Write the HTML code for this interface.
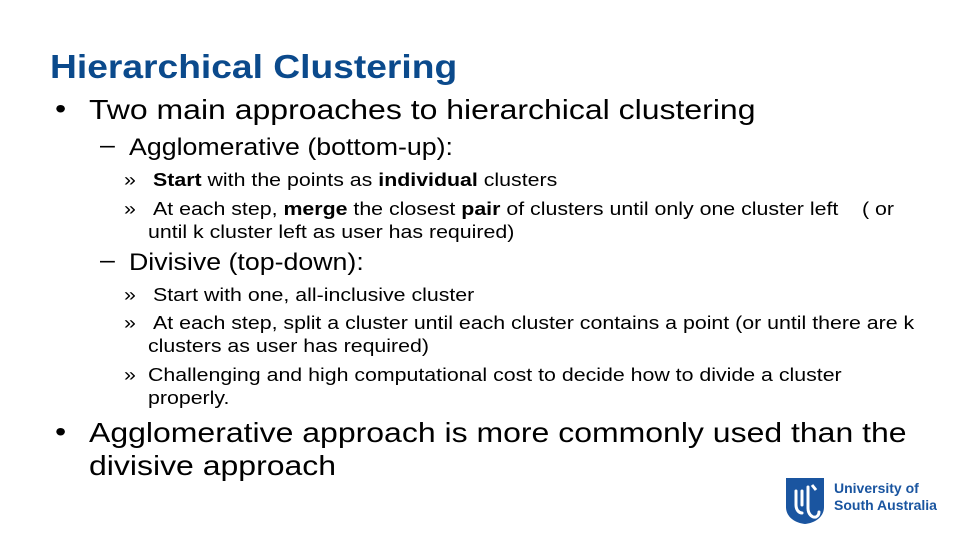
<!DOCTYPE html>
<html><head><meta charset="utf-8"><style>
body{margin:0;width:960px;height:540px;background:#fff;position:relative;overflow:hidden;font-family:"Liberation Sans",Arial,sans-serif;color:#000}
.l{position:absolute;white-space:nowrap;line-height:1;transform-origin:0 0}
.t{left:50px;top:50px;font-size:33px;font-weight:bold;color:#0b4a8c;transform:scaleX(1.127)}
.a{font-size:28px;transform:scaleX(1.142)}
.b{font-size:24px;transform:scaleX(1.114)}
.c{font-size:18px;transform:scaleX(1.185)}
</style></head><body>
<div class="l t">Hierarchical Clustering</div>
<div class="l a" style="left:55px;top:95px">•</div>
<div class="l a" style="left:89px;top:96px">Two main approaches to hierarchical clustering</div>
<div class="l b" style="left:100px;top:134px">–</div>
<div class="l b" style="left:129px;top:136px">Agglomerative (bottom-up):</div>
<div class="l c" style="left:124px;top:171px">»</div>
<div class="l c" style="left:153px;top:171px"><b>Start</b> with the points as <b>individual</b> clusters</div>
<div class="l c" style="left:124px;top:200px">»</div>
<div class="l c" style="left:153px;top:200px">At each step, <b>merge</b> the closest <b>pair</b> of clusters until only one cluster left &nbsp;&nbsp;&nbsp;( or</div>
<div class="l c" style="left:148px;top:223px">until k cluster left as user has required)</div>
<div class="l b" style="left:100px;top:249px">–</div>
<div class="l b" style="left:129px;top:251px">Divisive (top-down):</div>
<div class="l c" style="left:124px;top:286px">»</div>
<div class="l c" style="left:153px;top:286px">Start with one, all-inclusive cluster</div>
<div class="l c" style="left:124px;top:314px">»</div>
<div class="l c" style="left:153px;top:314px">At each step, split a cluster until each cluster contains a point (or until there are k</div>
<div class="l c" style="left:148px;top:337px">clusters as user has required)</div>
<div class="l c" style="left:124px;top:366px">»</div>
<div class="l c" style="left:148px;top:366px">Challenging and high computational cost to decide how to divide a cluster</div>
<div class="l c" style="left:148px;top:389px">properly.</div>
<div class="l a" style="left:55px;top:418px">•</div>
<div class="l a" style="left:89px;top:419px">Agglomerative approach is more commonly used than the</div>
<div class="l a" style="left:89px;top:452px">divisive approach</div>
<svg style="position:absolute;left:785px;top:477px" width="40" height="48" viewBox="0 0 40 48">
<path d="M1 1H39V30C39 40 30 46 20 47C10 46 1 40 1 30Z" fill="#1a55a0"/>
<path d="M11 14V28C11 33 14 36 17 36M17 14V28M23 10V31C23 37 27 41 31 40C33 39 34 37 34 35" stroke="#fff" stroke-width="3" fill="none" stroke-linecap="round"/>
<path d="M27 8L31 13" stroke="#fff" stroke-width="3"/>
</svg>
<div class="l" style="left:834px;top:481px;font-size:14px;font-weight:bold;color:#1a55a0">University of</div>
<div class="l" style="left:834px;top:498px;font-size:14px;font-weight:bold;color:#1a55a0">South Australia</div>
</body></html>
